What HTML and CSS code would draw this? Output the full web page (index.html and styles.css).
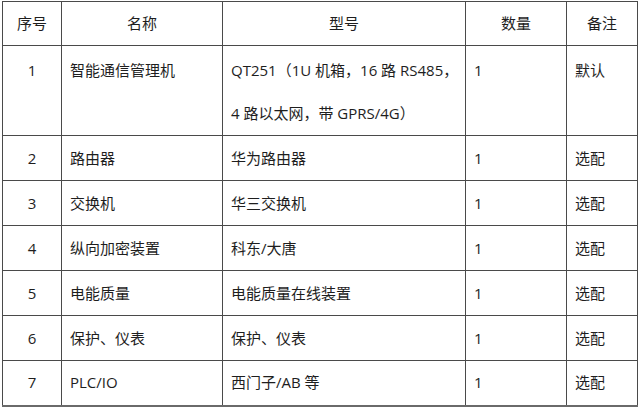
FILE: index.html
```html
<!DOCTYPE html>
<html lang="zh-CN">
<head>
<meta charset="utf-8">
<title>设备清单</title>
<link rel="stylesheet" href="styles.css">
</head>
<body>
<table class="spec">
  <colgroup>
    <col class="c1"><col class="c2"><col class="c3"><col class="c4"><col class="c5">
  </colgroup>
  <thead>
    <tr class="head">
      <th>序号</th><th>名称</th><th>型号</th><th>数量</th><th>备注</th>
    </tr>
  </thead>
  <tbody>
    <tr class="tall">
      <td class="num">1</td>
      <td>智能通信管理机</td>
      <td>QT251（1U 机箱，16 路 RS485，<br>4 路以太网，带 GPRS/4G）</td>
      <td>1</td>
      <td>默认</td>
    </tr>
    <tr><td class="num">2</td><td>路由器</td><td>华为路由器</td><td>1</td><td>选配</td></tr>
    <tr><td class="num">3</td><td>交换机</td><td>华三交换机</td><td>1</td><td>选配</td></tr>
    <tr><td class="num">4</td><td>纵向加密装置</td><td>科东/大唐</td><td>1</td><td>选配</td></tr>
    <tr><td class="num">5</td><td>电能质量</td><td>电能质量在线装置</td><td>1</td><td>选配</td></tr>
    <tr><td class="num">6</td><td>保护、仪表</td><td>保护、仪表</td><td>1</td><td>选配</td></tr>
    <tr class="last"><td class="num">7</td><td>PLC/IO</td><td>西门子/AB 等</td><td>1</td><td>选配</td></tr>
  </tbody>
</table>
</body>
</html>
```

FILE: styles.css
```css
html, body {
  margin: 0;
  padding: 0;
  background: #ffffff;
}

body {
  font-family: "Open Sans", "Noto Sans CJK SC", sans-serif;
  font-size: 15px;
  color: #1e1e1e;
}

.spec {
  border-collapse: collapse;
  table-layout: fixed;
  width: 635px;
  margin: 1px 0 0 2px;
}

.c1 { width: 59px; }
.c2 { width: 161px; }
.c3 { width: 243px; }
.c4 { width: 101px; }
.c5 { width: 71px; }

.spec th,
.spec td {
  border: 1px solid #4a4a4a;
  padding: 0 0 0 8px;
  line-height: 43px;
  text-align: left;
  vertical-align: middle;
  font-weight: normal;
  white-space: nowrap;
}

.spec th {
  text-align: center;
  padding: 0;
}

.head {
  height: 44px;
}

.spec tbody tr {
  height: 45px;
}

.spec tbody tr.tall {
  height: 90px;
}

.tall td {
  vertical-align: top;
  padding-top: 3px;
}

.spec td.num {
  text-align: center;
  padding: 0;
}

.tall td.num {
  padding-top: 3px;
}

.last td {
  border-bottom: 2px solid #6a6a6a;
}
```
